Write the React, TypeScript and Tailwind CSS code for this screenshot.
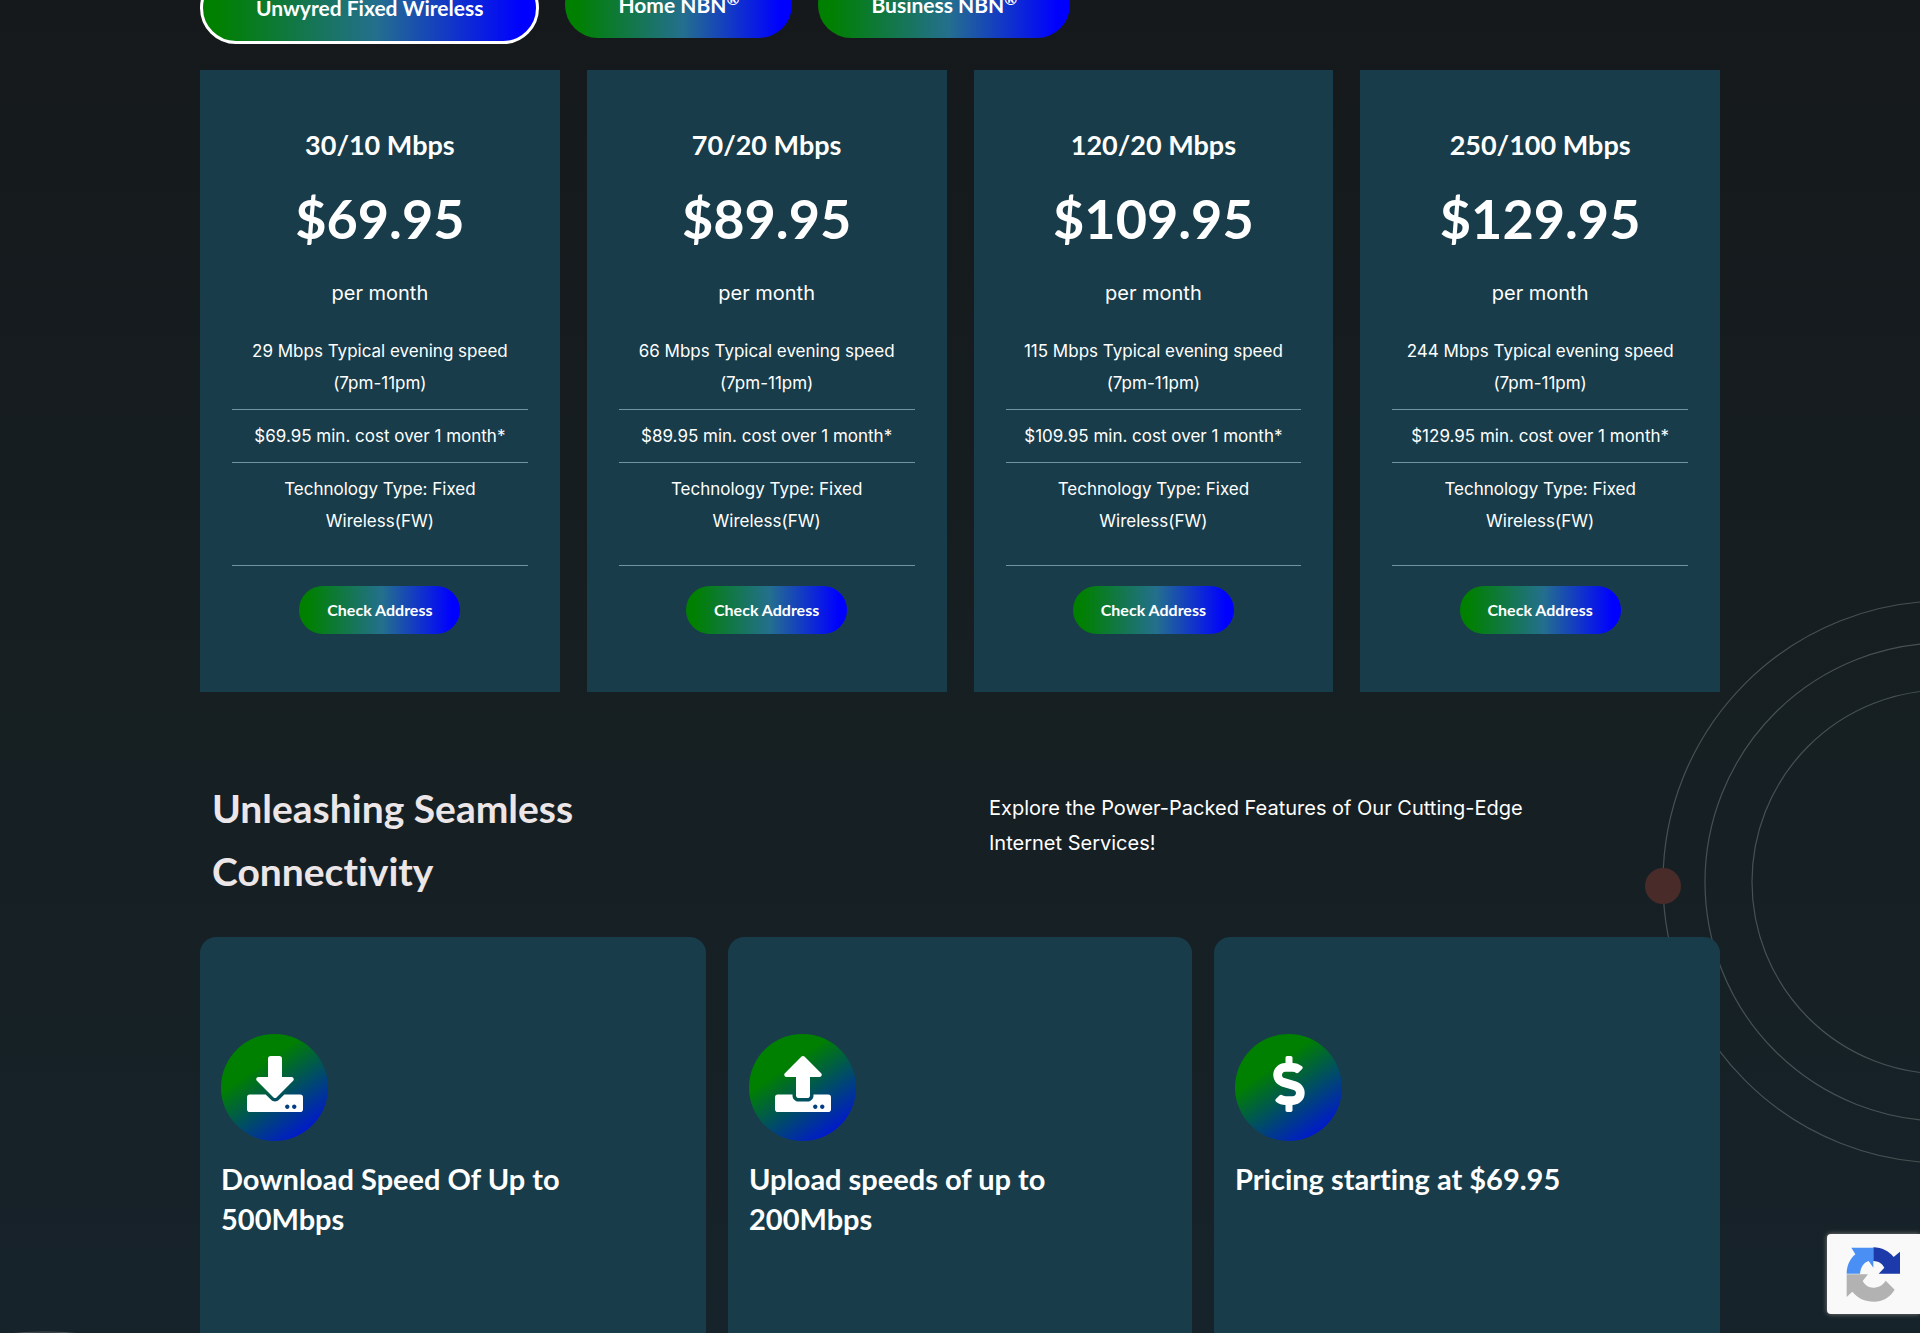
import type { ReactNode } from "react";
import { FaDollarSign, FaDownload, FaUpload } from "react-icons/fa";

type Plan = { speed: string; price: string; evening: string };

const plans: Plan[] = [
  { speed: "30/10 Mbps", price: "$69.95", evening: "29" },
  { speed: "70/20 Mbps", price: "$89.95", evening: "66" },
  { speed: "120/20 Mbps", price: "$109.95", evening: "115" },
  { speed: "250/100 Mbps", price: "$129.95", evening: "244" },
];

const pill =
  "rounded-full bg-[linear-gradient(90deg,#008000_5%,#246f8e_52%,#0000ff_95%)] text-white cursor-pointer";

function Tab({ active = false, children }: { active?: boolean; children: ReactNode }) {
  return (
    <button
      type="button"
      aria-pressed={active}
      className={
        pill +
        " px-[53px] font-['Lato',sans-serif] text-[21px] leading-[66px] font-bold whitespace-nowrap " +
        (active ? "border-[3px] border-white bg-origin-border" : "")
      }
    >
      {children}
    </button>
  );
}

function PlanCard({ plan }: { plan: Plan }) {
  return (
    <article className="flex flex-col items-center bg-[#183c4a] px-8 pt-[55px] pb-[58px] text-center text-white">
      <h3 className="font-['Lato',sans-serif] text-[27px] leading-10 font-bold">{plan.speed}</h3>
      <p className="mt-[18px] font-['Lato',sans-serif] text-[54px] leading-[72px] font-bold">{plan.price}</p>
      <p className="mt-[22px] text-[20px] leading-[32px]">per month</p>
      <ul className="mt-[26px] w-full text-[17px] leading-8">
        <li className="border-b border-[#7094a0] pb-[10px]">
          {plan.evening} Mbps Typical evening speed
          <br />
          (7pm-11pm)
        </li>
        <li className="border-b border-[#7094a0] py-[10px]">{plan.price} min. cost over 1 month*</li>
        <li className="border-b border-[#7094a0] px-8 pt-[10px] pb-[28px]">Technology Type: Fixed Wireless(FW)</li>
      </ul>
      <button
        type="button"
        className={pill + " mt-5 px-[28px] font-['Lato',sans-serif] text-[16px] leading-[48px] font-bold"}
      >
        Check Address
      </button>
    </article>
  );
}

function FeatureCard({ icon, children }: { icon: ReactNode; children: ReactNode }) {
  return (
    <article className="rounded-t-2xl bg-[#183c4a] px-[21px] pt-[97px] pb-[72px] text-white">
      <div className="flex size-[107px] items-center justify-center rounded-full bg-[linear-gradient(145deg,#008000_32%,#0000ff_100%)] pb-2 text-[56px]">
        {icon}
      </div>
      <h3 className="mt-[18px] max-w-[360px] font-['Lato',sans-serif] text-[29px] leading-10 font-bold">{children}</h3>
    </article>
  );
}

function Rings() {
  return (
    <svg
      aria-hidden="true"
      viewBox="0 0 600 600"
      className="pointer-events-none absolute top-[582px] right-[-324px] size-[600px]"
      fill="none"
      stroke="#465154"
      strokeWidth="1.2"
    >
      <circle cx="300" cy="300" r="281" />
      <circle cx="300" cy="300" r="239" />
      <circle cx="300" cy="300" r="192" />
      <circle cx="19" cy="304" r="18" fill="#492b2a" stroke="none" />
    </svg>
  );
}

function CaptchaBadge() {
  return (
    <div className="fixed right-0 bottom-[19px] flex h-20 w-[93px] items-center rounded-l-[4px] bg-[#f9f9f9] pl-[19px] shadow-[0_0_5px_#808080]">
      <svg viewBox="0 0 162 165" className="h-[55px] w-[54px]" role="img" aria-label="reCAPTCHA">
        <path fill="#4a90f4" d="M16 2H82V62L68 42C54 46 44 60 42 80H2C2 55 12 36 28 22Z" />
        <path fill="#1c3aa9" d="M82 1C108 2 128 12 143 30L162 14V80H98L115 62C108 49 98 43 82 42Z" />
        <path
          fill="#b2b2b2"
          d="M2 82H66L50 102C58 116 70 123 84 122C100 121 111 113 119 101L146 128C131 152 110 164 84 164C56 164 35 153 19 134L2 150Z"
        />
      </svg>
    </div>
  );
}

export default function App() {
  return (
    <div className="relative flex min-h-screen flex-col overflow-hidden bg-[linear-gradient(180deg,#15191b_0%,#161f22_55%,#16232a_100%)] font-['Inter',sans-serif] [font-variant-ligatures:none]">
      <Rings />
      <svg
        aria-hidden="true"
        viewBox="0 0 700 700"
        className="pointer-events-none absolute bottom-[-698px] left-[-305px] size-[700px]"
        fill="none"
        stroke="#4a5356"
      >
        <circle cx="350" cy="350" r="349" />
      </svg>
      <main className="relative mx-auto -mt-7 flex w-full max-w-[1520px] flex-1 flex-col">
        <nav aria-label="Plan type" className="flex items-start gap-[26px]">
          <Tab active>Unwyred Fixed Wireless</Tab>
          <Tab>
            Home NBN<sup>®</sup>
          </Tab>
          <Tab>
            Business NBN<sup>®</sup>
          </Tab>
        </nav>
        <section className="mt-[26px] grid grid-cols-4 gap-[27px]">
          {plans.map((plan) => (
            <PlanCard key={plan.speed} plan={plan} />
          ))}
        </section>
        <section className="mt-[85px] grid grid-cols-2 gap-[58px] px-3">
          <h2 className="max-w-[480px] font-['Lato',sans-serif] text-[39px] leading-[63px] font-bold text-[#ece6e8]">
            Unleashing Seamless Connectivity
          </h2>
          <p className="max-w-[580px] pt-[14px] text-[20px] leading-[35px] text-white">
            Explore the Power-Packed Features of Our Cutting-Edge Internet Services!
          </p>
        </section>
        <section className="mt-[34px] grid flex-1 grid-cols-[506fr_464fr_506fr] gap-[22px]">
          <FeatureCard icon={<FaDownload />}>Download Speed Of Up to 500Mbps</FeatureCard>
          <FeatureCard icon={<FaUpload />}>Upload speeds of up to 200Mbps</FeatureCard>
          <FeatureCard icon={<FaDollarSign />}>Pricing starting at $69.95</FeatureCard>
        </section>
      </main>
      <CaptchaBadge />
    </div>
  );
}
